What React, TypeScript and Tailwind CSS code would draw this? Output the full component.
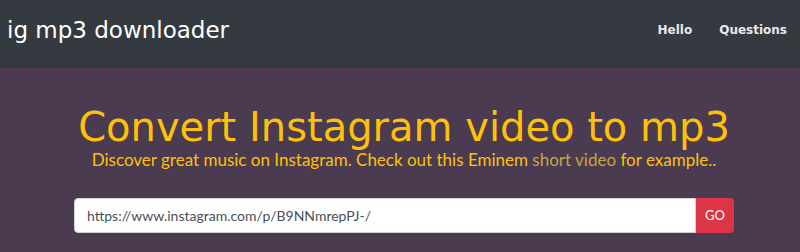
import React from "react";

export default function App() {
  return (
    <div className="w-[800px] h-[252px] overflow-hidden bg-[#4a3b50]">
      <nav className="h-[68px] bg-[#343a40] flex items-center justify-between pl-[7px] pr-[13px] font-['DejaVu_Sans',sans-serif]">
        <span className="text-white text-[23px] leading-none pb-[8px]">ig mp3 downloader</span>
        <div className="flex items-center gap-[27px] text-[12px] font-bold text-[#e9e9ea] pb-[8px]">
          <span>Hello</span>
          <span>Questions</span>
        </div>
      </nav>
      <div className="flex flex-col items-center pt-[37px]">
        <h1 className="text-[#ffc107] text-[40px] leading-[44px] ml-[8px] font-['DejaVu_Sans',sans-serif]">
          Convert Instagram video to mp3
        </h1>
        <p className="text-[#ffc107] text-[17px] leading-[20px] mt-[1px] ml-[8px] font-['Lato',sans-serif]">
          Discover great music on Instagram. Check out this Eminem{" "}
          <span className="text-[#c9a441]">short video</span> for example..
        </p>
        <div className="flex mt-[28px] w-[660px] ml-[8px] font-['Lato',sans-serif]">
          <div className="flex-1 h-[35px] bg-white rounded-l-[4px] border border-[#ced4da] flex items-center px-[12px] text-[14px] text-[#495057]">
            https://www.instagram.com/p/B9NNmrepPJ-/
          </div>
          <button className="w-[38px] h-[35px] bg-[#dc3545] rounded-r-[4px] text-white text-[13px]">GO</button>
        </div>
      </div>
    </div>
  );
}
